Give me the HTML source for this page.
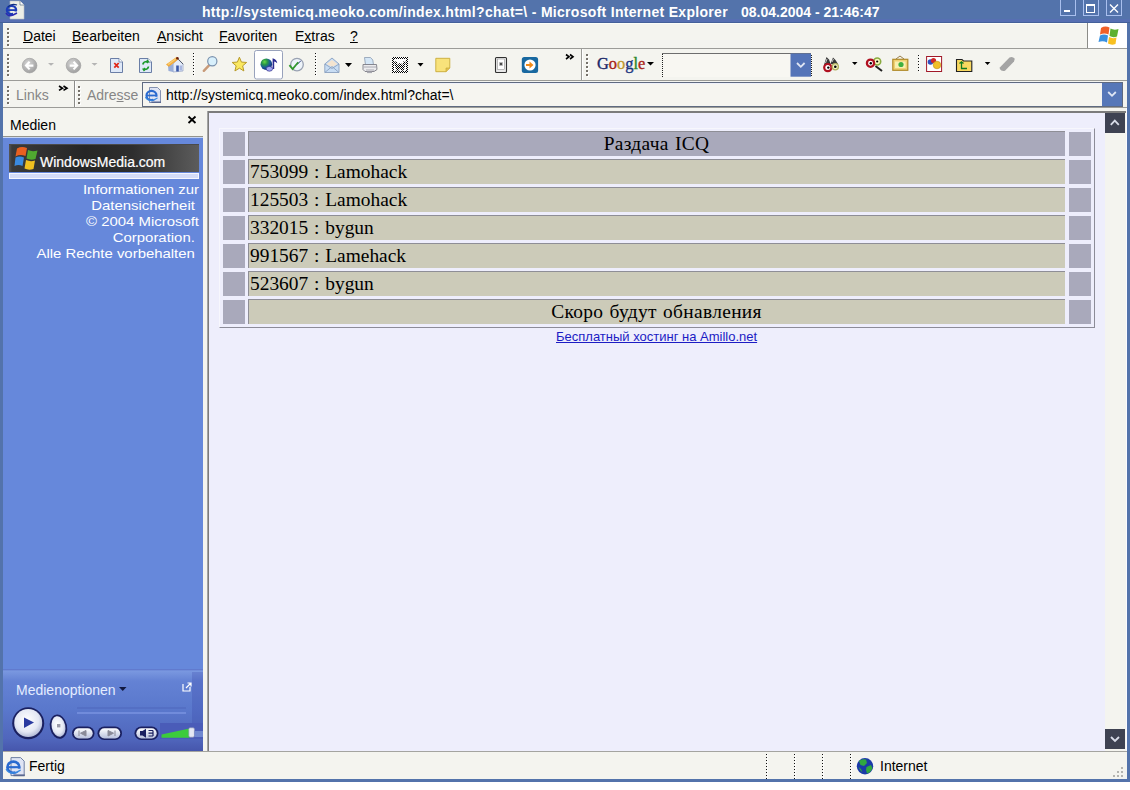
<!DOCTYPE html>
<html><head><meta charset="utf-8">
<style>
*{margin:0;padding:0;box-sizing:border-box}
html,body{width:1130px;height:790px;overflow:hidden;background:#fff;font-family:"Liberation Sans",sans-serif}
.a{position:absolute}
.t{position:absolute;white-space:nowrap;line-height:14px;font-size:14px;color:#000}
.bg{background:#f4f4ef}
.nc{position:absolute;width:22px;height:24px;background:#a9a9bb}
.wc{position:absolute;left:248px;width:817px;height:25px;border-top:1px solid #8e8e96;border-left:1px solid #8e8e96}
.tx{position:absolute;white-space:nowrap;font-family:"Liberation Serif",serif;font-size:19.4px;line-height:25px;height:25px;color:#000;word-spacing:1px}
.u{text-decoration:underline}
#ov{position:absolute;left:0;top:0}
</style></head><body>
<div class="a" style="left:0;top:0;width:1130px;height:782px;background:#5373ab"></div>
<div class="a" style="left:0;top:19px;width:1130px;height:3px;background:#566fb2"></div>
<div class="a" style="left:0;top:22px;width:1130px;height:1px;background:#44609a"></div>
<!-- title -->
<div class="t" style="left:202px;top:5px;font-weight:bold;color:#fff;letter-spacing:0.3px">http://systemicq.meoko.com/index.html?chat=\ - Microsoft Internet Explorer</div>
<div class="t" style="left:741px;top:5px;font-weight:bold;color:#fff">08.04.2004 - 21:46:47</div>
<!-- menu -->
<div class="a bg" style="left:3px;top:23px;width:1084px;height:25px"></div>
<div class="a" style="left:3px;top:23px;width:1084px;height:1px;background:#fbfcf8"></div>
<div class="a" style="left:1087px;top:23px;width:1px;height:26px;background:#8c8c88"></div>
<div class="a" style="left:1088px;top:23px;width:39px;height:25px;background:#fff"></div>
<div class="a" style="left:3px;top:48px;width:1124px;height:1px;background:#9c9c98"></div>
<div class="t" style="left:23px;top:29px"><span class="u">D</span>atei</div>
<div class="t" style="left:72px;top:29px"><span class="u">B</span>earbeiten</div>
<div class="t" style="left:157px;top:29px"><span class="u">A</span>nsicht</div>
<div class="t" style="left:219px;top:29px"><span class="u">F</span>avoriten</div>
<div class="t" style="left:295px;top:29px">E<span class="u">x</span>tras</div>
<div class="t" style="left:350px;top:29px"><span class="u">?</span></div>
<!-- toolbar -->
<div class="a bg" style="left:3px;top:49px;width:1124px;height:31px"></div>
<div class="a" style="left:3px;top:80px;width:1124px;height:1px;background:#9c9c98"></div>
<div class="a" style="left:581px;top:49px;width:1px;height:31px;background:#9c9c98"></div>
<div class="a" style="left:582px;top:49px;width:1px;height:31px;background:#fff"></div>
<!-- address row -->
<div class="a bg" style="left:3px;top:81px;width:1124px;height:26px"></div>
<div class="a" style="left:3px;top:107px;width:1124px;height:1px;background:#9c9c98"></div>
<div class="a" style="left:74px;top:81px;width:1px;height:26px;background:#8c8c88"></div>
<div class="a" style="left:75px;top:81px;width:1px;height:26px;background:#fff"></div>
<div class="t" style="left:16px;top:88px;color:#868686">Links</div>
<div class="t" style="left:87px;top:88px;color:#868686">Adre<span class="u">s</span>se</div>
<div class="a" style="left:142px;top:82px;width:981px;height:25px;background:#f6f5f0;border:1px solid #5f6a80"></div>
<div class="a" style="left:143px;top:83px;width:959px;height:1px;background:#eef0fa"></div>
<div class="t" style="left:166px;top:88px">http://systemicq.meoko.com/index.html?chat=\</div>
<div class="a" style="left:1102px;top:83px;width:20px;height:23px;background:#5677b8"></div>
<!-- panel header + splitter -->
<div class="a bg" style="left:3px;top:108px;width:1124px;height:4px"></div>
<div class="a bg" style="left:3px;top:108px;width:205px;height:643px"></div>
<div class="t" style="left:10px;top:118px">Medien</div>
<div class="a" style="left:3px;top:136px;width:200px;height:1px;background:#94948c"></div>
<div class="a" style="left:3px;top:137px;width:200px;height:533px;background:#6688db"></div>
<div class="a" style="left:3px;top:137px;width:200px;height:1px;background:#c4d4f6"></div>
<!-- banner -->
<div class="a" style="left:9px;top:144px;width:190px;height:28px;background:linear-gradient(90deg,#585858 0,#3a3a3a 3px,#262626 40%,#2e2e2e 65%,#5c5c5c 100%)"></div>
<div class="a" style="left:9px;top:144px;width:190px;height:1px;background:#4a4a4a"></div>
<div class="a" style="left:9px;top:173px;width:190px;height:6px;background:#d4dcf8;border:1px solid #f4f6ff"></div>
<div class="t" style="left:40px;top:155px;font-size:14px;color:#fff;-webkit-text-stroke:0.2px #fff">WindowsMedia.com</div>
<div class="a" style="left:20px;top:182px;width:179px;text-align:right;font-size:13px;line-height:16px;color:#fff;white-space:pre;transform:scaleX(1.147);transform-origin:right top">Informationen zur
Datensicherheit 
© 2004 Microsoft
Corporation. 
Alle Rechte vorbehalten </div>
<!-- media options -->
<div class="a" style="left:3px;top:669px;width:200px;height:82px;background:linear-gradient(#5870c8 0,#7a98e0 2px,#6482d4 12px,#5a78cc 40px,#5066bc 70px,#4656ac 82px)"></div>
<div class="t" style="left:16px;top:683px;color:#e4ecff">Medienoptionen</div>
<div class="a" style="left:192px;top:672px;width:11px;height:51px;background:rgba(50,60,160,0.22)"></div>
<div class="a" style="left:160px;top:723px;width:43px;height:16px;background:#4a5cb8"></div>
<!-- content -->
<div class="a" style="left:207px;top:111px;width:920px;height:640px;border-left:2px solid #7c7c7c;border-top:2px solid #7c7c7c;background:#eeeefc"></div>
<div class="a" style="left:207px;top:111px;width:1px;height:640px;background:#a4a4a4"></div>
<div class="a bg" style="left:1105px;top:113px;width:22px;height:638px"></div>
<div class="a" style="left:1126px;top:108px;width:1px;height:643px;background:#fafaff"></div>
<div class="a" style="left:1105px;top:113px;width:20px;height:20px;background:#3e4252"></div>
<div class="a" style="left:1105px;top:729px;width:20px;height:20px;background:#3e4252"></div>
<!-- table -->
<div class="a" style="left:219px;top:128px;width:876px;height:200px;border-top:1px solid #f7f7fd;border-left:1px solid #f7f7fd;border-right:1px solid #8c8c98;border-bottom:1px solid #8c8c98"></div>
<div class="nc" style="top:132px;left:223px"></div><div class="wc" style="top:131px;background:#a9a9bb"></div><div class="nc" style="top:132px;left:1069px"></div>
<div class="tx" style="top:131px;left:248px;width:817px;text-align:center;letter-spacing:0.34px">Раздача ICQ</div>
<div class="nc" style="top:160px;left:223px"></div><div class="wc" style="top:159px;background:#cccbb9"></div><div class="nc" style="top:160px;left:1069px"></div>
<div class="tx" style="top:159px;left:250px">753099 : Lamohack</div>
<div class="nc" style="top:188px;left:223px"></div><div class="wc" style="top:187px;background:#cccbb9"></div><div class="nc" style="top:188px;left:1069px"></div>
<div class="tx" style="top:187px;left:250px">125503 : Lamohack</div>
<div class="nc" style="top:216px;left:223px"></div><div class="wc" style="top:215px;background:#cccbb9"></div><div class="nc" style="top:216px;left:1069px"></div>
<div class="tx" style="top:215px;left:250px">332015 : bygun</div>
<div class="nc" style="top:244px;left:223px"></div><div class="wc" style="top:243px;background:#cccbb9"></div><div class="nc" style="top:244px;left:1069px"></div>
<div class="tx" style="top:243px;left:250px">991567 : Lamehack</div>
<div class="nc" style="top:272px;left:223px"></div><div class="wc" style="top:271px;background:#cccbb9"></div><div class="nc" style="top:272px;left:1069px"></div>
<div class="tx" style="top:271px;left:250px">523607 : bygun</div>
<div class="nc" style="top:300px;left:223px"></div><div class="wc" style="top:299px;background:#cccbb9"></div><div class="nc" style="top:300px;left:1069px"></div>
<div class="tx" style="top:299px;left:248px;width:817px;text-align:center;letter-spacing:0.34px">Скоро будут обнавления</div>
<div class="t" style="left:556px;top:330px;font-size:13px;color:#1c1cc4;text-decoration:underline">Бесплатный хостинг на Amillo.net</div>
<!-- status -->
<div class="a bg" style="left:3px;top:751px;width:1124px;height:28px"></div>
<div class="a" style="left:3px;top:751px;width:1124px;height:1px;background:#a4a4a0"></div>
<div class="t" style="left:29px;top:759px">Fertig</div>
<div class="t" style="left:880px;top:759px">Internet</div>
<svg id="ov" width="1130" height="790" viewBox="0 0 1130 790"><defs>
<radialGradient id="gcirc" cx="0.4" cy="0.35" r="0.7"><stop offset="0" stop-color="#d6d6d6"/><stop offset="1" stop-color="#9c9c9c"/></radialGradient>
<radialGradient id="globe" cx="0.35" cy="0.3" r="0.8"><stop offset="0" stop-color="#68d848"/><stop offset="0.3" stop-color="#2a9848"/><stop offset="0.6" stop-color="#1a5a98"/><stop offset="1" stop-color="#102070"/></radialGradient>
<radialGradient id="playg" cx="0.45" cy="0.4" r="0.7"><stop offset="0" stop-color="#ffffff"/><stop offset="0.6" stop-color="#e4e8f4"/><stop offset="1" stop-color="#9aa4c8"/></radialGradient>
<linearGradient id="pill" x1="0" y1="0" x2="0" y2="1"><stop offset="0" stop-color="#ffffff"/><stop offset="1" stop-color="#b8c0dc"/></linearGradient>
<pattern id="dith" width="2" height="2" patternUnits="userSpaceOnUse"><rect width="2" height="2" fill="#fff"/><rect width="1" height="1" fill="#000"/><rect x="1" y="1" width="1" height="1" fill="#000"/></pattern>
</defs>
<path d="M10,1 H20 L24,5 V19 H10 Z" fill="#eceee6" stroke="#b8bcc8" stroke-width="0.6"/>
<path d="M20,1 V5 H24" fill="#fff" stroke="#708090" stroke-width="0.8"/>
<ellipse cx="11.5" cy="10" rx="4.6" ry="4.2" fill="none" stroke="#1c3cb8" stroke-width="2.3"/>
<rect x="7" y="9.2" width="9" height="1.8" fill="#1c3cb8"/>
<rect x="13" y="11.5" width="5" height="3" fill="#eceee6"/>
<path d="M6,13 Q8,17 13,15 L17,13" fill="none" stroke="#2a2ab0" stroke-width="1.6"/>
<path d="M8,7 Q11,3 17,5" fill="none" stroke="#103080" stroke-width="1.2"/>
<rect x="1060.5" y="-0.5" width="15" height="16" fill="none" stroke="#a9bfee" stroke-width="1"/>
<rect x="1083.5" y="-0.5" width="15" height="16" fill="none" stroke="#a9bfee" stroke-width="1"/>
<rect x="1106.5" y="-0.5" width="15" height="16" fill="none" stroke="#a9bfee" stroke-width="1"/>
<rect x="1064" y="10" width="6" height="2" fill="#fff"/>
<rect x="1086.5" y="4.5" width="8" height="8" fill="none" stroke="#fff" stroke-width="1"/><rect x="1086" y="4" width="9" height="2" fill="#fff"/>
<path d="M1110,4.5 L1118,12.5 M1118,4.5 L1110,12.5" stroke="#fff" stroke-width="1.4"/>
<rect x="8" y="29" width="2" height="2" fill="#fff"/>
<rect x="7" y="28" width="2" height="2" fill="#75716a"/>
<rect x="8" y="33" width="2" height="2" fill="#fff"/>
<rect x="7" y="32" width="2" height="2" fill="#75716a"/>
<rect x="8" y="37" width="2" height="2" fill="#fff"/>
<rect x="7" y="36" width="2" height="2" fill="#75716a"/>
<rect x="8" y="41" width="2" height="2" fill="#fff"/>
<rect x="7" y="40" width="2" height="2" fill="#75716a"/>
<rect x="8" y="45" width="2" height="2" fill="#fff"/>
<rect x="7" y="44" width="2" height="2" fill="#75716a"/>
<path d="M1101,28 Q1105,25.5 1109.5,27.5 L1108.5,34.5 Q1104.5,32.5 1100,34.5 Z" fill="#f06028"/>
<path d="M1110.5,28.5 Q1114,30.5 1118.5,29 L1117,36.5 Q1113,38 1109.5,36 Z" fill="#5cb030"/>
<path d="M1100,35.5 Q1104,33.5 1108,35.5 L1107,42.5 Q1103,40.5 1098.5,42 Z" fill="#3890e0"/>
<path d="M1109,37 Q1112.5,39 1116.5,37.5 L1115.5,44 Q1111.5,45.5 1108,43.5 Z" fill="#f8c020"/>
<rect x="8" y="55" width="2" height="2" fill="#fff"/>
<rect x="7" y="54" width="2" height="2" fill="#75716a"/>
<rect x="8" y="59" width="2" height="2" fill="#fff"/>
<rect x="7" y="58" width="2" height="2" fill="#75716a"/>
<rect x="8" y="63" width="2" height="2" fill="#fff"/>
<rect x="7" y="62" width="2" height="2" fill="#75716a"/>
<rect x="8" y="67" width="2" height="2" fill="#fff"/>
<rect x="7" y="66" width="2" height="2" fill="#75716a"/>
<rect x="8" y="71" width="2" height="2" fill="#fff"/>
<rect x="7" y="70" width="2" height="2" fill="#75716a"/>
<rect x="8" y="75" width="2" height="2" fill="#fff"/>
<rect x="7" y="74" width="2" height="2" fill="#75716a"/>
<circle cx="29.6" cy="65.6" r="7.3" fill="url(#gcirc)" stroke="#a0a0a0" stroke-width="0.7"/>
<path d="M26.0,65.6 H33.4 M29.6,61.8 L26.0,65.6 L29.6,69.4" fill="none" stroke="#fff" stroke-width="2.1"/>
<circle cx="73.5" cy="65.6" r="7.3" fill="url(#gcirc)" stroke="#a0a0a0" stroke-width="0.7"/>
<path d="M77.1,65.6 H69.7 M73.5,61.8 L77.1,65.6 L73.5,69.4" fill="none" stroke="#fff" stroke-width="2.1"/>
<path d="M48,63 h6 l-3.0,2.8 z" fill="#b4b4b4"/>
<path d="M91.5,63 h6 l-3.0,2.8 z" fill="#b4b4b4"/>
<path d="M110.5,58.5 H119 L122.5,62 V72.5 H110.5 Z" fill="#dfe9f8" stroke="#6a7ea6" stroke-width="1"/>
<path d="M119,58.5 V62 H122.5" fill="#fff" stroke="#6a7ea6" stroke-width="0.8"/>
<path d="M114.3,63 L118.7,67.6 M118.7,63 L114.3,67.6" stroke="#e02818" stroke-width="1.8"/>
<path d="M139.5,58.5 H148 L151.5,62 V72.5 H139.5 Z" fill="#dfe9f8" stroke="#6a7ea6" stroke-width="1"/>
<path d="M148,58.5 V62 H151.5" fill="#fff" stroke="#6a7ea6" stroke-width="0.8"/>
<path d="M142.8,64.5 Q143.5,61 148,61.5 L147,60 M148,61.5 L146.8,63" fill="none" stroke="#1a9a2a" stroke-width="1.6"/>
<path d="M148.5,66.5 Q148,70 143.5,69.5 L144.5,71 M143.5,69.5 L144.8,68" fill="none" stroke="#1a9a2a" stroke-width="1.6"/>
<polygon points="173,64 177.5,58.8 183,64 183,71 173,72" fill="#e4ecfa" stroke="#8090b8" stroke-width="0.6"/>
<polygon points="168,65.8 173.2,63.8 173.2,72 168.5,71" fill="#9aaed8"/>
<rect x="176.2" y="65.5" width="2.6" height="6" fill="#3a58a8"/>
<rect x="179.6" y="65.5" width="2.4" height="5" fill="#aab8e0"/>
<polygon points="166,64.5 176.8,56.8 178.6,59.2 168.8,66.8" fill="#f2a838"/>
<polygon points="167.5,64 176.5,57.6 177.2,58.6 168.5,65.2" fill="#f8cc70"/>
<path d="M178.3,59.2 L183.2,64.2" stroke="#505868" stroke-width="1"/>
<circle cx="177.4" cy="58.2" r="1.3" fill="#6a2010"/>
<rect x="194" y="53" width="1" height="23" fill="#fdfdfb"/>
<rect x="193" y="53" width="1" height="1" fill="#101010"/>
<rect x="193" y="56" width="1" height="1" fill="#101010"/>
<rect x="193" y="59" width="1" height="1" fill="#101010"/>
<rect x="193" y="62" width="1" height="1" fill="#101010"/>
<rect x="193" y="65" width="1" height="1" fill="#101010"/>
<rect x="193" y="68" width="1" height="1" fill="#101010"/>
<rect x="193" y="71" width="1" height="1" fill="#101010"/>
<rect x="193" y="74" width="1" height="1" fill="#101010"/>
<path d="M209.5,64.8 L203.8,70.8" stroke="#c89a78" stroke-width="2.4" stroke-linecap="round"/>
<circle cx="212.3" cy="61.3" r="4.6" fill="#d8f0fc" stroke="#7a92ae" stroke-width="1.2"/>
<polygon points="239.40,57.20 241.40,62.05 246.63,62.45 242.63,65.85 243.87,70.95 239.40,68.20 234.93,70.95 236.17,65.85 232.17,62.45 237.40,62.05" fill="#fae860" stroke="#b89a28" stroke-width="1"/>
<rect x="254.5" y="50.5" width="28" height="28.5" rx="2" fill="#fff" stroke="#98a2bc" stroke-width="1"/>
<circle cx="266.3" cy="64.2" r="5.8" fill="url(#globe)"/>
<path d="M272.6,69 V58.3 Q276.8,59.5 277.3,63.2 Q275.5,61.5 274.2,61.5 V69" fill="#2a2a90"/>
<ellipse cx="269.4" cy="68.8" rx="3.2" ry="2.4" fill="#a0a4f0" stroke="#30308a" stroke-width="0.7"/>
<circle cx="297" cy="64.6" r="6.3" fill="#eef4fa" stroke="#9aa2b2" stroke-width="1.3"/>
<path d="M297,64.6 L300.8,60.8" stroke="#2a3a80" stroke-width="1"/>
<path d="M289.4,65.2 L292.6,69 L298.2,62.2" fill="none" stroke="#32982e" stroke-width="1.8"/>
<rect x="316" y="53" width="1" height="23" fill="#fdfdfb"/>
<rect x="315" y="53" width="1" height="1" fill="#101010"/>
<rect x="315" y="56" width="1" height="1" fill="#101010"/>
<rect x="315" y="59" width="1" height="1" fill="#101010"/>
<rect x="315" y="62" width="1" height="1" fill="#101010"/>
<rect x="315" y="65" width="1" height="1" fill="#101010"/>
<rect x="315" y="68" width="1" height="1" fill="#101010"/>
<rect x="315" y="71" width="1" height="1" fill="#101010"/>
<rect x="315" y="74" width="1" height="1" fill="#101010"/>
<path d="M324.8,64 L332,58 L339,64 V72.5 H324.8 Z" fill="#c8ddf4" stroke="#8aa0c0" stroke-width="0.9"/>
<path d="M326.5,64 L332,60 L337.5,64 L332,67 Z" fill="#f4e4d0"/>
<path d="M324.8,72.5 L332,66.5 L339,72.5 M324.8,64 L332,68.5 L339,64" fill="none" stroke="#8aa0c0" stroke-width="0.9"/>
<path d="M345,63 h7 l-3.5,4 z" fill="#000"/>
<path d="M364.5,57.5 H370.5 L372.8,60 L373.5,65 H365.5 Z" fill="#d4e6f6" stroke="#8a9ab0" stroke-width="0.8"/>
<path d="M363,64.5 H376.5 L377,69.5 L374,71.5 H365 L363,69.5 Z" fill="#ececee" stroke="#7c7c84" stroke-width="0.9"/>
<path d="M364,67 H376 M366,70 H374" stroke="#9a9aa2" stroke-width="0.8"/>
<rect x="367" y="71.5" width="5" height="1.6" fill="#a8a8b0"/>
<rect x="392" y="57" width="16" height="16" fill="url(#dith)"/>
<rect x="394" y="59" width="12" height="12" fill="#fff"/>
<path d="M395.3,61.5 L397.6,70.3 L400,63.8 L402.4,70.3 L404.7,61.5" fill="none" stroke="url(#dith)" stroke-width="2.8" stroke-linejoin="bevel"/>
<path d="M417.5,63 h6 l-3.0,3.4 z" fill="#000"/>
<path d="M435.8,58.3 H449.8 V68 L446,71.7 H435.8 Z" fill="#f8e27a" stroke="#c8aa38" stroke-width="0.9"/>
<path d="M449.8,68 H446 V71.7" fill="#e0c050" stroke="#c8aa38" stroke-width="0.7"/>
<rect x="495.5" y="57.5" width="11" height="15" rx="1" fill="#e8e8e8" stroke="#303030" stroke-width="1.1"/>
<rect x="497.5" y="59" width="7" height="10.5" fill="#fff" stroke="#808080" stroke-width="0.5"/>
<path d="M501,62 V66 M499,64 H503 M499.6,62.6 L502.4,65.4 M502.4,62.6 L499.6,65.4" stroke="#303030" stroke-width="0.7"/>
<rect x="521.8" y="57" width="16.3" height="16" rx="2.5" fill="#1868a0"/>
<circle cx="530" cy="65" r="5.6" fill="#fff"/>
<path d="M526,64 H529.5 V61.5 L533.5,65 L529.5,68.5 V66 H526 Z" fill="#f08a18"/>
<path d="M566,54.5 L569,56.8 L566,59 M570,54.5 L573,56.8 L570,59" fill="none" stroke="#000" stroke-width="1.6"/>
<rect x="587" y="55" width="2" height="2" fill="#fff"/>
<rect x="586" y="54" width="2" height="2" fill="#75716a"/>
<rect x="587" y="59" width="2" height="2" fill="#fff"/>
<rect x="586" y="58" width="2" height="2" fill="#75716a"/>
<rect x="587" y="63" width="2" height="2" fill="#fff"/>
<rect x="586" y="62" width="2" height="2" fill="#75716a"/>
<rect x="587" y="67" width="2" height="2" fill="#fff"/>
<rect x="586" y="66" width="2" height="2" fill="#75716a"/>
<rect x="587" y="71" width="2" height="2" fill="#fff"/>
<rect x="586" y="70" width="2" height="2" fill="#75716a"/>
<rect x="587" y="75" width="2" height="2" fill="#fff"/>
<rect x="586" y="74" width="2" height="2" fill="#75716a"/>
<text x="597" y="69.4" font-family="Liberation Serif" font-size="16.4" stroke-width="0.35"><tspan fill="#1a2868" stroke="#1a2868">G</tspan><tspan fill="#a82418" stroke="#a82418">o</tspan><tspan fill="#c09830" stroke="#c09830">o</tspan><tspan fill="#1a3480" stroke="#1a3480">g</tspan><tspan fill="#288428" stroke="#288428">l</tspan><tspan fill="#a82418" stroke="#a82418">e</tspan></text>
<path d="M647,62 h7 l-3.5,3.4 z" fill="#000"/>
<rect x="662" y="53" width="129" height="24" fill="#f8f7f2"/>
<rect x="662" y="53" width="149" height="1" fill="#6e6e6e"/>
<rect x="662" y="54" width="1" height="1" fill="#202020"/>
<rect x="662" y="56" width="1" height="1" fill="#202020"/>
<rect x="662" y="58" width="1" height="1" fill="#202020"/>
<rect x="662" y="60" width="1" height="1" fill="#202020"/>
<rect x="662" y="62" width="1" height="1" fill="#202020"/>
<rect x="662" y="64" width="1" height="1" fill="#202020"/>
<rect x="662" y="66" width="1" height="1" fill="#202020"/>
<rect x="662" y="68" width="1" height="1" fill="#202020"/>
<rect x="662" y="70" width="1" height="1" fill="#202020"/>
<rect x="662" y="72" width="1" height="1" fill="#202020"/>
<rect x="662" y="74" width="1" height="1" fill="#202020"/>
<rect x="662" y="76" width="1" height="1" fill="#202020"/>
<rect x="790.5" y="53.5" width="20.5" height="23.2" fill="#5474b8"/>
<path d="M797,63 L800.8,66.8 L804.6,63" fill="none" stroke="#e0e6f4" stroke-width="1.8"/>
<rect x="811" y="55" width="1" height="1" fill="#202020"/>
<rect x="811" y="57" width="1" height="1" fill="#202020"/>
<rect x="811" y="59" width="1" height="1" fill="#202020"/>
<rect x="811" y="61" width="1" height="1" fill="#202020"/>
<rect x="811" y="63" width="1" height="1" fill="#202020"/>
<rect x="811" y="65" width="1" height="1" fill="#202020"/>
<rect x="811" y="67" width="1" height="1" fill="#202020"/>
<rect x="811" y="69" width="1" height="1" fill="#202020"/>
<rect x="811" y="71" width="1" height="1" fill="#202020"/>
<rect x="811" y="73" width="1" height="1" fill="#202020"/>
<rect x="811" y="75" width="1" height="1" fill="#202020"/>
<path d="M824,65 L826.5,57 L829,59.5 L831,65 Z" fill="#383838"/>
<path d="M830.5,64 L833,57.5 L835.5,60 L838,64 Z" fill="#383838"/>
<path d="M825.5,63 L827,59 M832,62 L833.5,59" stroke="#c8c8c8" stroke-width="1"/>
<circle cx="827.8" cy="67.6" r="3.6" fill="#fff" stroke="#b01020" stroke-width="2.2"/>
<circle cx="828.3" cy="67.6" r="1.2" fill="#000"/>
<circle cx="835.3" cy="66.8" r="3.1" fill="#f8f8c8" stroke="#b0b060" stroke-width="1.3"/>
<circle cx="835.3" cy="66.8" r="1.3" fill="#000"/>
<path d="M852,62 h5.5 l-2.75,3 z" fill="#000"/>
<path d="M875.5,66 L882,71" stroke="#202020" stroke-width="2"/>
<circle cx="877.2" cy="61.5" r="3.5" fill="#f8f8c0" stroke="#8aaa40" stroke-width="1.6"/>
<circle cx="877.2" cy="61.5" r="1.1" fill="#000"/>
<circle cx="870.5" cy="63.2" r="3.6" fill="#fff" stroke="#b01020" stroke-width="2.3"/>
<circle cx="870.8" cy="63.2" r="1.2" fill="#000"/>
<path d="M896,59 L900,56 L904,59" fill="none" stroke="#806020" stroke-width="0.8"/>
<rect x="892.8" y="59.3" width="15" height="11" fill="#f0d070" stroke="#b08a28" stroke-width="1.2"/>
<rect x="895" y="61.5" width="10.6" height="6.6" fill="#f8f0b0"/>
<circle cx="901" cy="64.5" r="2.6" fill="#40b040"/>
<rect x="919" y="55" width="1" height="18" fill="#fdfdfb"/>
<rect x="918" y="55" width="1" height="1" fill="#101010"/>
<rect x="918" y="58" width="1" height="1" fill="#101010"/>
<rect x="918" y="61" width="1" height="1" fill="#101010"/>
<rect x="918" y="64" width="1" height="1" fill="#101010"/>
<rect x="918" y="67" width="1" height="1" fill="#101010"/>
<rect x="918" y="70" width="1" height="1" fill="#101010"/>
<rect x="926.6" y="56.5" width="15" height="15" fill="#fff" stroke="#a01828" stroke-width="1"/>
<circle cx="930.5" cy="62" r="2.8" fill="#3050c0"/>
<circle cx="933.5" cy="60.5" r="2.6" fill="#d02828"/>
<circle cx="937" cy="65" r="3.8" fill="#f0c028" stroke="#c09010" stroke-width="0.6"/>
<path d="M956.5,59.5 H962 L963.5,61 H971.8 V71.5 H956.5 Z" fill="#f8d860" stroke="#202020" stroke-width="1.1"/>
<path d="M959.5,63.5 L961.5,61.8 L963.5,63.5 M961.5,62 V68.5 H967" fill="none" stroke="#107a20" stroke-width="1.3"/>
<path d="M984.8,62 h5.5 l-2.75,3 z" fill="#000"/>
<path d="M999.8,67.5 L1009.5,57.5 Q1012.5,56 1014.8,58.8 L1014,61.5 L1005,70.8 Q1001.5,71.8 999.8,69 Z" fill="#a4a4a4"/>
<rect x="8" y="87" width="2" height="2" fill="#fff"/>
<rect x="7" y="86" width="2" height="2" fill="#75716a"/>
<rect x="8" y="91" width="2" height="2" fill="#fff"/>
<rect x="7" y="90" width="2" height="2" fill="#75716a"/>
<rect x="8" y="95" width="2" height="2" fill="#fff"/>
<rect x="7" y="94" width="2" height="2" fill="#75716a"/>
<rect x="8" y="99" width="2" height="2" fill="#fff"/>
<rect x="7" y="98" width="2" height="2" fill="#75716a"/>
<rect x="8" y="103" width="2" height="2" fill="#fff"/>
<rect x="7" y="102" width="2" height="2" fill="#75716a"/>
<path d="M59,86 L62.5,88.2 L59,90.4 M63.5,86 L67,88.2 L63.5,90.4" fill="none" stroke="#000" stroke-width="1.6"/>
<rect x="79" y="87" width="2" height="2" fill="#fff"/>
<rect x="78" y="86" width="2" height="2" fill="#75716a"/>
<rect x="79" y="91" width="2" height="2" fill="#fff"/>
<rect x="78" y="90" width="2" height="2" fill="#75716a"/>
<rect x="79" y="95" width="2" height="2" fill="#fff"/>
<rect x="78" y="94" width="2" height="2" fill="#75716a"/>
<rect x="79" y="99" width="2" height="2" fill="#fff"/>
<rect x="78" y="98" width="2" height="2" fill="#75716a"/>
<rect x="79" y="103" width="2" height="2" fill="#fff"/>
<rect x="78" y="102" width="2" height="2" fill="#75716a"/>
<g transform="translate(144.5,87) scale(1.0)"><path d="M5,0.5 H13 L16,3.5 V15.5 H5 Z" fill="#dfe4f4" stroke="#6a7aa0" stroke-width="0.8"/><rect x="7" y="14.5" width="9.5" height="1.5" fill="#5a6890"/><ellipse cx="7" cy="8.5" rx="5" ry="4.6" fill="none" stroke="#2a6ad0" stroke-width="2.2"/><rect x="2.5" y="7.6" width="9" height="1.8" fill="#2a6ad0"/><rect x="8.5" y="9.8" width="4.5" height="2.6" fill="#dfe4f4"/><path d="M1,10 Q3,14.5 9,13 L13,11" fill="none" stroke="#3a8ae0" stroke-width="1.2"/></g>
<path d="M1108.2,92 L1112,95.8 L1115.8,92" fill="none" stroke="#dfe6f4" stroke-width="1.8"/>
<path d="M188.5,116.5 L195.5,123 M195.5,116.5 L188.5,123" stroke="#000" stroke-width="1.8"/>
<path d="M17,148.5 Q21.5,146 27,148 L25.5,156 Q20,154 15.5,156.5 Z" fill="#e86020"/>
<path d="M28,150 Q32,152 37.5,150.5 L35.5,159 Q30.5,160.5 26.5,158.5 Z" fill="#50a830"/>
<path d="M15.5,157.5 Q19.5,155.5 24,157.5 L22.5,166 Q18.5,164 14.5,166 Z" fill="#3a8ae0"/>
<path d="M26,160 Q30.5,162 35,160.5 L33.5,169 Q28.5,170.5 24.5,168.5 Z" fill="#f0c020"/>
<path d="M119,687 H126.5 L122.75,691 Z" fill="#101840"/>
<path d="M183,684 V691 H190 V687 M186,688 L190.5,683.5 M187.5,683 H191 V686.5" fill="none" stroke="#fff" stroke-width="1.2"/>
<rect x="77" y="707.5" width="109" height="1" fill="#4e66bc"/>
<rect x="77" y="712.5" width="109" height="1" fill="#8aa2ec"/>
<circle cx="28.2" cy="723.2" r="16" fill="#1a2060"/>
<circle cx="28.2" cy="723" r="14" fill="url(#playg)"/>
<path d="M24,717.5 L34,722.5 L24,728 Z" fill="#2a3aa0"/>
<ellipse cx="58.5" cy="726.7" rx="8.6" ry="12.2" transform="rotate(-12 58.5 726.7)" fill="#1a2060"/>
<ellipse cx="58.5" cy="726.5" rx="6.8" ry="10.4" transform="rotate(-12 58.5 726.5)" fill="url(#playg)"/>
<rect x="57" y="724" width="3.4" height="3.4" fill="#9a9aa8"/>
<rect x="72" y="726.5" width="22.5" height="13.6" rx="6.8" fill="#1a2060"/>
<rect x="73.8" y="728.2" width="18.9" height="10.2" rx="5.1" fill="url(#pill)"/>
<rect x="97.5" y="726.5" width="24.5" height="13.6" rx="6.8" fill="#1a2060"/>
<rect x="99.3" y="728.2" width="20.9" height="10.2" rx="5.1" fill="url(#pill)"/>
<rect x="134.5" y="726.5" width="24.0" height="13.6" rx="6.8" fill="#1a2060"/>
<rect x="136.3" y="728.2" width="20.4" height="10.2" rx="5.1" fill="url(#pill)"/>
<path d="M79,730.5 V736 M80.5,733.2 L86,730.5 V736 Z" fill="#8a8a98" stroke="#8a8a98" stroke-width="1"/>
<path d="M115,730.5 V736 M113.5,733.2 L108,730.5 V736 Z" fill="#8a8a98" stroke="#8a8a98" stroke-width="1"/>
<path d="M140,731 H142.5 L146,728.8 V737.8 L142.5,735.5 H140 Z" fill="#1a2060"/>
<path d="M148.5,730.5 H153 M148.5,733.2 H153 M148.5,736 H153 M153,730.5 V736" fill="none" stroke="#1a2060" stroke-width="1.2"/>
<path d="M161.5,737.8 V734.6 L189.5,728.6 V737.8 Z" fill="#3ccc3c"/>
<rect x="188.8" y="727.8" width="5.6" height="9.4" rx="1.4" fill="#e4e8f4" stroke="#8a90b0" stroke-width="0.6"/>
<rect x="194.5" y="731" width="8.5" height="6" fill="#7088d0"/>
<path d="M1110.8,124.8 L1114.8,120.6 L1118.8,124.8" fill="none" stroke="#d8dce8" stroke-width="1.8"/>
<path d="M1111,737 L1115,741 L1119,737" fill="none" stroke="#d8dce8" stroke-width="1.8"/>
<g transform="translate(5,757) scale(1.2)"><path d="M5,0.5 H13 L16,3.5 V15.5 H5 Z" fill="#dfe4f4" stroke="#6a7aa0" stroke-width="0.8"/><rect x="7" y="14.5" width="9.5" height="1.5" fill="#5a6890"/><ellipse cx="7" cy="8.5" rx="5" ry="4.6" fill="none" stroke="#2a6ad0" stroke-width="2.2"/><rect x="2.5" y="7.6" width="9" height="1.8" fill="#2a6ad0"/><rect x="8.5" y="9.8" width="4.5" height="2.6" fill="#dfe4f4"/><path d="M1,10 Q3,14.5 9,13 L13,11" fill="none" stroke="#3a8ae0" stroke-width="1.2"/></g>
<rect x="767" y="754" width="1" height="25" fill="#fdfdfb"/>
<rect x="766" y="754" width="1" height="1" fill="#101010"/>
<rect x="766" y="757" width="1" height="1" fill="#101010"/>
<rect x="766" y="760" width="1" height="1" fill="#101010"/>
<rect x="766" y="763" width="1" height="1" fill="#101010"/>
<rect x="766" y="766" width="1" height="1" fill="#101010"/>
<rect x="766" y="769" width="1" height="1" fill="#101010"/>
<rect x="766" y="772" width="1" height="1" fill="#101010"/>
<rect x="766" y="775" width="1" height="1" fill="#101010"/>
<rect x="766" y="778" width="1" height="1" fill="#101010"/>
<rect x="795" y="754" width="1" height="25" fill="#fdfdfb"/>
<rect x="794" y="754" width="1" height="1" fill="#101010"/>
<rect x="794" y="757" width="1" height="1" fill="#101010"/>
<rect x="794" y="760" width="1" height="1" fill="#101010"/>
<rect x="794" y="763" width="1" height="1" fill="#101010"/>
<rect x="794" y="766" width="1" height="1" fill="#101010"/>
<rect x="794" y="769" width="1" height="1" fill="#101010"/>
<rect x="794" y="772" width="1" height="1" fill="#101010"/>
<rect x="794" y="775" width="1" height="1" fill="#101010"/>
<rect x="794" y="778" width="1" height="1" fill="#101010"/>
<rect x="823" y="754" width="1" height="25" fill="#fdfdfb"/>
<rect x="822" y="754" width="1" height="1" fill="#101010"/>
<rect x="822" y="757" width="1" height="1" fill="#101010"/>
<rect x="822" y="760" width="1" height="1" fill="#101010"/>
<rect x="822" y="763" width="1" height="1" fill="#101010"/>
<rect x="822" y="766" width="1" height="1" fill="#101010"/>
<rect x="822" y="769" width="1" height="1" fill="#101010"/>
<rect x="822" y="772" width="1" height="1" fill="#101010"/>
<rect x="822" y="775" width="1" height="1" fill="#101010"/>
<rect x="822" y="778" width="1" height="1" fill="#101010"/>
<rect x="851" y="754" width="1" height="25" fill="#fdfdfb"/>
<rect x="850" y="754" width="1" height="1" fill="#101010"/>
<rect x="850" y="757" width="1" height="1" fill="#101010"/>
<rect x="850" y="760" width="1" height="1" fill="#101010"/>
<rect x="850" y="763" width="1" height="1" fill="#101010"/>
<rect x="850" y="766" width="1" height="1" fill="#101010"/>
<rect x="850" y="769" width="1" height="1" fill="#101010"/>
<rect x="850" y="772" width="1" height="1" fill="#101010"/>
<rect x="850" y="775" width="1" height="1" fill="#101010"/>
<rect x="850" y="778" width="1" height="1" fill="#101010"/>
<circle cx="865" cy="766.3" r="8.2" fill="#1a3aa8"/>
<path d="M859,761 Q862,758.5 866,759.5 L867,763 L864,766 L860.5,765 Z M866.5,767 L871,765 L872.5,768.5 Q871,772 867,773.5 L866,770 Z M858.5,767 Q860,771 862.5,772.5 L861,769 Z" fill="#30a840"/>
<rect x="1121" y="767" width="2" height="2" fill="#b4b4b0"/>
<rect x="1117" y="771" width="2" height="2" fill="#b4b4b0"/>
<rect x="1121" y="771" width="2" height="2" fill="#b4b4b0"/>
<rect x="1113" y="775" width="2" height="2" fill="#b4b4b0"/>
<rect x="1117" y="775" width="2" height="2" fill="#b4b4b0"/>
<rect x="1121" y="775" width="2" height="2" fill="#b4b4b0"/>
</svg>
</body></html>
